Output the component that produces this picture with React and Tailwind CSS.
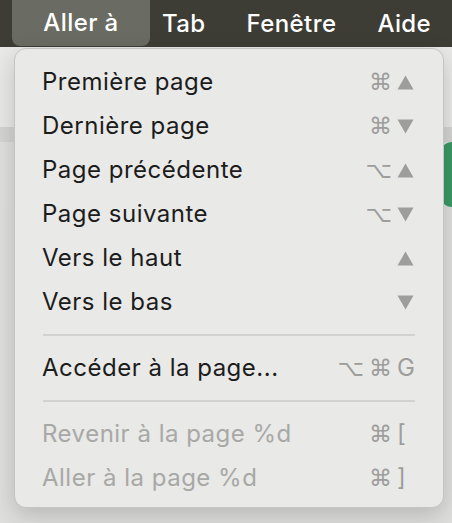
import React from "react";

const Up = () => (
  <svg width="17" height="15" viewBox="0 0 17 15">
    <path d="M8.5 0.5 L16.5 14.5 L0.5 14.5 Z" fill="currentColor" />
  </svg>
);

const Down = () => (
  <svg width="17" height="15" viewBox="0 0 17 15">
    <path d="M0.5 0.5 L16.5 0.5 L8.5 14.5 Z" fill="currentColor" />
  </svg>
);

const items = [
  { label: "Première page", mods: "⌘", key: <Up /> },
  { label: "Dernière page", mods: "⌘", key: <Down /> },
  { label: "Page précédente", mods: "⌥", key: <Up /> },
  { label: "Page suivante", mods: "⌥", key: <Down /> },
  { label: "Vers le haut", mods: "", key: <Up /> },
  { label: "Vers le bas", mods: "", key: <Down /> },
];

const MenuItem = ({ label, mods, keyGlyph, disabled }) => (
  <div className="h-[44px] flex items-center pl-[27px] pr-[23px]">
    <span
      className={`flex-1 text-[24px] tracking-[0.5px] ${
        disabled ? "text-[#a8a8a6]" : "text-[#1c1c1c]"
      }`}
    >
      {label}
    </span>
    <div className="flex items-center text-[#9d9d9b]">
      <span className="w-[64px] flex justify-end gap-[5px] text-[23px] font-['DejaVu_Sans',sans-serif] leading-none">
        {mods.split("").map((m, i) => (
          <span key={i}>{m}</span>
        ))}
      </span>
      <span className="w-[28px] pl-[5px] flex items-center text-[24px] leading-none">
        {keyGlyph}
      </span>
    </div>
  </div>
);

const Separator = () => (
  <div className="h-[22px] flex items-center px-[28px]">
    <div className="h-[2px] w-full bg-[#d2d2d0]" />
  </div>
);

export default function App() {
  return (
    <div className="w-[452px] h-[523px] relative overflow-hidden bg-[#e2e2e0] font-['Inter',sans-serif]">
      {/* menu bar */}
      <div className="h-[47px] bg-[#3d3d35] flex items-center text-white text-[24px] font-medium tracking-[0.4px]">
        <div className="ml-[12px] h-[46px] w-[138px] rounded-b-[8px] bg-[#6a6b62] flex items-center justify-center self-start">
          Aller à
        </div>
        <div className="ml-[12px]">Tab</div>
        <div className="ml-[41px]">Fenêtre</div>
        <div className="ml-[41px]">Aide</div>
      </div>

      {/* window content behind the menu */}
      <div className="flex flex-col">
        <div className="h-[80px] bg-[#e9e9e7]" />
        <div className="h-[15px] bg-[#d4d4d2]" />
        <div className="h-[65px] flex justify-end bg-[#e0e1de]">
          <div className="w-[12px] h-full rounded-l-[12px] bg-[#3a9966]" />
        </div>
        <div className="h-[330px] bg-[#dfe0de]" />
      </div>

      {/* dropdown */}
      <div className="absolute left-[14px] top-[48px] w-[430px] h-[460px] rounded-[12px] bg-[#e9e9e7] border border-[#c4c4c2] shadow-[0_8px_24px_rgba(0,0,0,0.18)] pt-[11px]">
        {items.map((it) => (
          <MenuItem key={it.label} label={it.label} mods={it.mods} keyGlyph={it.key} />
        ))}
        <Separator />
        <MenuItem label="Accéder à la page..." mods="⌥⌘" keyGlyph="G" />
        <Separator />
        <MenuItem label="Revenir à la page %d" mods="⌘" keyGlyph="[" disabled />
        <MenuItem label="Aller à la page %d" mods="⌘" keyGlyph="]" disabled />
      </div>
    </div>
  );
}
